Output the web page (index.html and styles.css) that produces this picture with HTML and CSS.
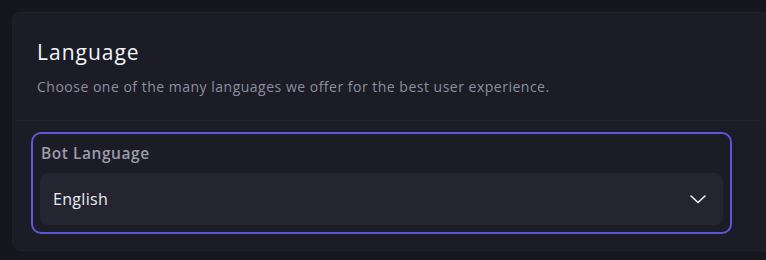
FILE: index.html
```html
<!DOCTYPE html>
<html>
<head>
<meta charset="utf-8">
<link rel="stylesheet" href="styles.css">
</head>
<body>
<section class="card">
  <header class="card-head">
    <h2 class="title">Language</h2>
    <p class="subtitle">Choose one of the many languages we offer for the best user experience.</p>
  </header>
  <div class="card-body">
    <div class="field">
      <label class="field-label">Bot Language</label>
      <div class="select">
        <span class="select-value">English</span>
        <svg class="chevron" width="16" height="9" viewBox="0 0 16 9" fill="none">
          <path d="M1 1 L8 7.5 L15 1" stroke="#f2f2f6" stroke-width="1.6" stroke-linecap="round" stroke-linejoin="round"/>
        </svg>
      </div>
    </div>
  </div>
</section>
</body>
</html>
```
FILE: styles.css
```css
html, body {
  margin: 0;
  overflow: hidden;
}
body {
  background: #15161e;
  padding: 12px 0 10px 12px;
  font-family: "Open Sans", "Liberation Sans", sans-serif;
  height: 260px;
  box-sizing: border-box;
}
.card {
  width: 800px;
  background: #1b1c26;
  border: 1px solid #20212c;
  border-radius: 9px;
  box-sizing: border-box;
  height: 239px;
}
.card-head {
  padding: 25px 24px 23px;
  border-bottom: 1px solid #20212b;
}
.title {
  margin: 0;
  font-size: 21px;
  line-height: 28px;
  font-weight: 500;
  color: #f4f4f8;
  letter-spacing: 1px;
}
.subtitle {
  margin: 11px 0 0;
  font-size: 14px;
  line-height: 20px;
  color: #8e8f9f;
  letter-spacing: 0.5px;
}
.card-body {
  padding: 11px 18px 0;
}
.field {
  width: 701px;
  box-sizing: border-box;
  border: 2px solid #5d58d4;
  border-radius: 10px;
  padding: 9px 7px 7px;
}
.field-label {
  display: block;
  font-size: 15.5px;
  line-height: 20px;
  font-weight: 600;
  color: #9c9baa;
  padding-left: 1px;
  margin-bottom: 10px;
  letter-spacing: 0.55px;
}
.select {
  height: 52px;
  background: #242530;
  border-radius: 8px;
  display: flex;
  align-items: center;
  justify-content: space-between;
  padding: 0 17px 0 13px;
}
.select-value {
  font-size: 16px;
  font-weight: 500;
  color: #ececf2;
  letter-spacing: 0.3px;
  margin-top: -1px;
}
.chevron {
  display: block;
}
```
